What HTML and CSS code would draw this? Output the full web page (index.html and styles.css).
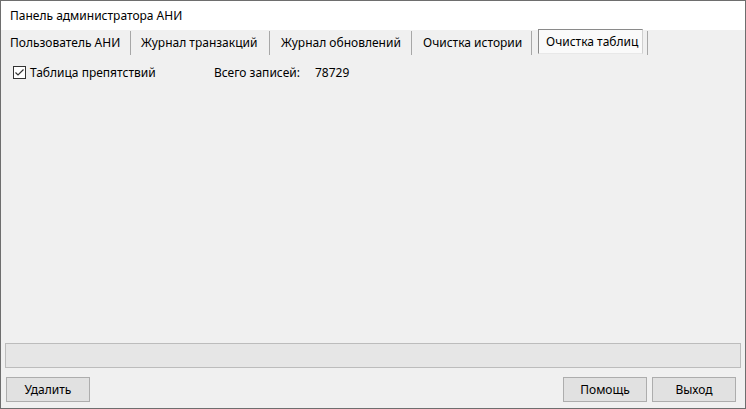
FILE: index.html
```html
<!DOCTYPE html>
<html lang="ru">
<head>
<meta charset="utf-8">
<title>Панель администратора АНИ</title>
<link rel="stylesheet" href="styles.css">
</head>
<body>
<div class="window">
  <div class="titlebar">Панель администратора АНИ</div>
  <div class="tabs">
    <div class="tab t1">Пользователь АНИ</div><span class="sep"></span>
    <div class="tab t2">Журнал транзакций</div><span class="sep"></span>
    <div class="tab t3">Журнал обновлений</div><span class="sep"></span>
    <div class="tab t4">Очистка истории</div><span class="sep"></span>
    <div class="tab active">Очистка таблиц</div><span class="sep last"></span>
  </div>
  <div class="content">
    <div class="row">
      <label class="check">
        <svg class="box" width="13" height="13" viewBox="0 0 13 13">
          <rect x="0.5" y="0.5" width="12" height="12" fill="#fff" stroke="#333"/>
          <path d="M2.5 6.5 L5 9 L10.5 3.5" fill="none" stroke="#333" stroke-width="1.2"/>
        </svg>
        <span>Таблица препятствий</span>
      </label>
      <span class="label">Всего записей:</span>
      <span class="value">78729</span>
    </div>
    <div class="spacer"></div>
    <div class="progress"></div>
    <div class="buttons">
      <button class="btn">Удалить</button>
      <div class="grow"></div>
      <button class="btn">Помощь</button>
      <button class="btn">Выход</button>
    </div>
  </div>
</div>
</body>
</html>
```
FILE: styles.css
```css
html, body {
  margin: 0;
  padding: 0;
  background: #f0f0f0;
}
body {
  font-family: "Noto Sans", "Open Sans", sans-serif;
  font-size: 12px;
  color: #000;
}
.window {
  width: 746px;
  height: 409px;
  box-sizing: border-box;
  border: 1px solid #6e6e6e;
  display: flex;
  flex-direction: column;
  background: #f0f0f0;
}
.titlebar {
  height: 29px;
  background: #fff;
  padding-left: 9px;
  line-height: 29px;
  white-space: nowrap;
}
.tabs {
  height: 25px;
  display: flex;
  align-items: flex-start;
}
.tab {
  height: 25px;
  line-height: 25px;
  box-sizing: border-box;
  white-space: nowrap;
  overflow: hidden;
}
.t1 { width: 129px; padding-left: 9px; }
.t2 { width: 138px; padding-left: 10px; }
.t3 { width: 141px; padding-left: 11px; }
.t4 { width: 119px; padding-left: 11px; }
.sep {
  width: 1px;
  height: 24px;
  margin-top: 1px;
  background: #a7a7a7;
}
.tab.active {
  width: 105px;
  margin-left: 6px;
  margin-right: 4px;
  margin-top: -1px;
  padding-left: 7px;
  line-height: 23px;
  background: #fafafa;
  border-top: 1px solid #8a8a8a;
  border-left: 1px solid #8a8a8a;
  border-right: 1px solid #cfcfcf;
  border-bottom: 1px solid #e8e8e8;
}
.content {
  flex: 1;
  display: flex;
  flex-direction: column;
}
.row {
  display: flex;
  align-items: center;
  padding-top: 11px;
  padding-left: 12px;
  height: 13px;
  line-height: 13px;
}
.check {
  width: 201px;
  display: flex;
  align-items: center;
  gap: 4px;
  white-space: nowrap;
}
.box {
  display: block;
  flex: none;
}
.label {
  width: 101px;
  white-space: nowrap;
}
.spacer {
  flex: 1;
}
.progress {
  height: 25px;
  box-sizing: border-box;
  margin: 0 4px 0 4px;
  border: 1px solid #bcbcbc;
  background: #e6e6e6;
}
.buttons {
  display: flex;
  margin-top: 9px;
  margin-bottom: 6px;
  padding-left: 5px;
  padding-right: 9px;
  gap: 5px;
}
.grow {
  flex: 1;
}
.btn {
  width: 84px;
  height: 25px;
  box-sizing: border-box;
  border: 1px solid #adadad;
  background: #e1e1e1;
  font-family: inherit;
  font-size: 12px;
  color: #000;
  padding: 0;
  margin: 0;
}
```
